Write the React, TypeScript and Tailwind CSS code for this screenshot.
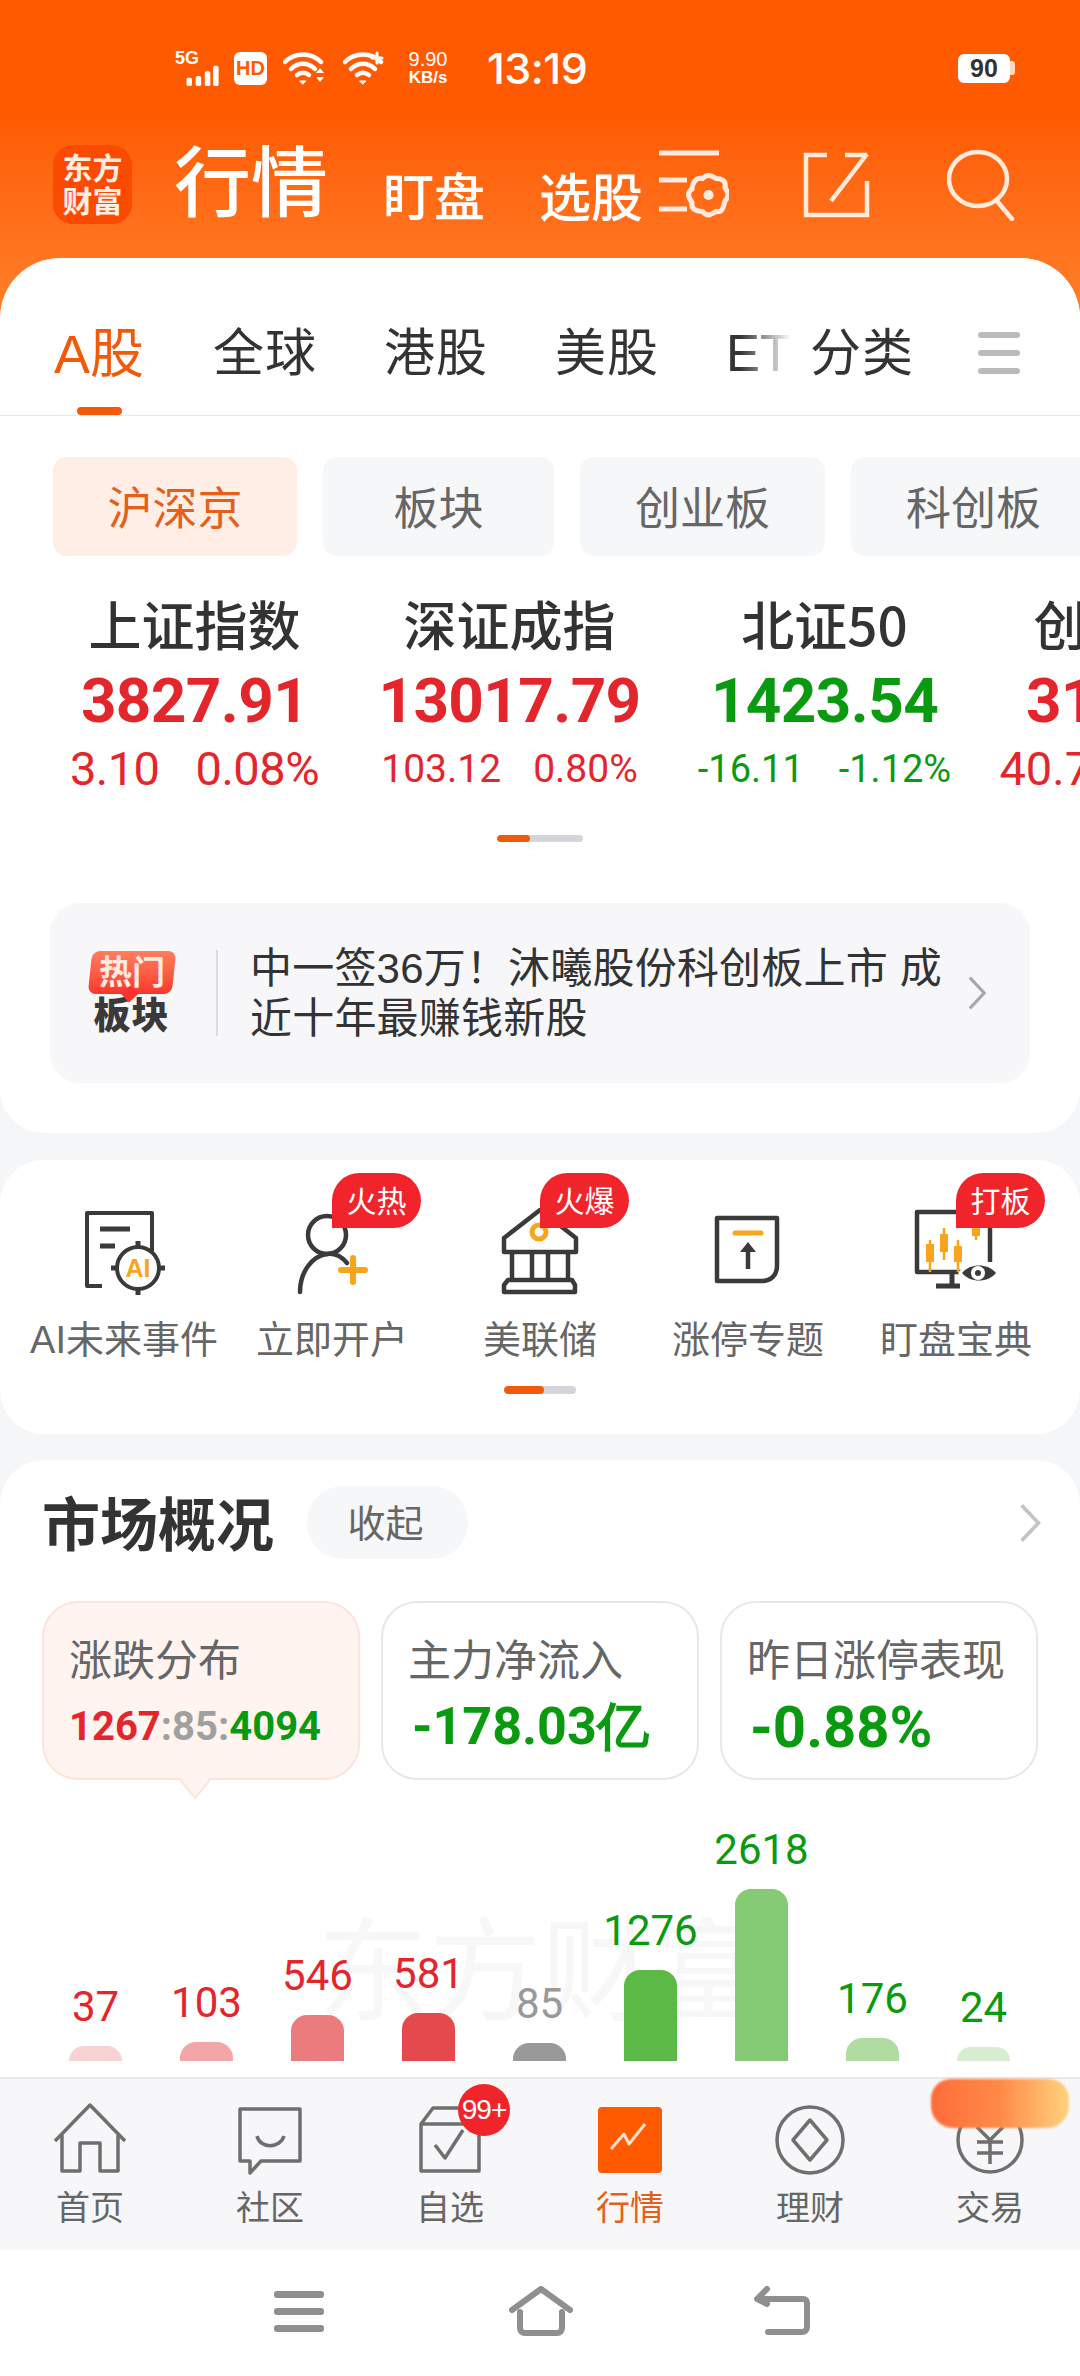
import React from "react";

const RED = "text-[#e3262c]";
const GREEN = "text-[#0a9a10]";
const NUM = "[font-family:Roboto,'Liberation_Sans',sans-serif]";

function Wifi({ plus }: { plus?: boolean }) {
  return (
    <svg width="42" height="34" viewBox="0 0 42 34" fill="none" stroke="#fff" strokeLinecap="round">
      <path d="M2 11C12 1 28 1 38 11" strokeWidth="4.5" />
      <path d="M8 18C15 11 25 11 32 18" strokeWidth="4.5" />
      <path d="M14 24C18 21 22 21 26 24" strokeWidth="4.5" />
      <path d="M17 30h6l-3 3z" fill="#fff" strokeWidth="1" />
      {plus ? (
        <path d="M34 2v10M29 7h10" strokeWidth="3" />
      ) : (
        <path d="M33 22l4-5 4 5zM33 26h8l-4 5z" fill="#fff" stroke="none" />
      )}
    </svg>
  );
}

function StatusBar() {
  return (
    <div className="h-[44px] flex items-center pl-[175px] pr-[65px] text-white">
      <div className="relative w-[48px] h-[34px]">
        <span className="absolute left-0 top-[-3px] text-[18px] leading-[20px] font-bold">5G</span>
        <svg className="absolute left-[10px] top-[13px]" width="36" height="22" viewBox="0 0 36 24" fill="#fff">
          <rect x="0" y="15" width="6" height="9" rx="2" />
          <rect x="10" y="13" width="6" height="11" rx="2" />
          <rect x="20" y="8" width="6" height="16" rx="2" />
          <rect x="29" y="2" width="6" height="22" rx="2" />
        </svg>
      </div>
      <div className="ml-[11px] w-[33px] h-[33px] bg-white rounded-[6px] flex items-center justify-center text-[#ff5a00] text-[20px] leading-none font-bold">HD</div>
      <div className="ml-[16px] flex"><Wifi /></div>
      <div className="ml-[18px] flex"><Wifi plus /></div>
      <div className="ml-[22px] w-[42px] flex flex-col items-center">
        <span className="text-[20px] leading-[20px] whitespace-nowrap">9.90</span>
        <span className="text-[17px] leading-[18px] font-bold whitespace-nowrap">KB/s</span>
      </div>
      <span className="ml-[38px] [font-family:Inter,sans-serif] text-[43px] leading-[44px] font-medium tracking-[-0.5px]">13:19</span>
      <div className="ml-auto flex items-center">
        <div className="w-[52px] h-[29px] bg-white rounded-[6px] flex items-center justify-center text-[#333] text-[25px] leading-none font-bold">90</div>
        <div className="w-[5px] h-[14px] bg-[#ffd9c0] rounded-r-[3px]" />
      </div>
    </div>
  );
}

function TitleRow() {
  return (
    <div className="mt-[55px] h-[79px] flex items-end pl-[53px]">
      <div className="w-[79px] h-[79px] rounded-[20px] bg-[#fb4a02] flex flex-col items-center justify-center text-[#ffeee2] text-[30px] leading-[33px] font-bold">
        <span>东方</span>
        <span>财富</span>
      </div>
      <span className="ml-[42px] text-white text-[77px] leading-[79px] font-medium">行情</span>
      <span className="ml-[55px] text-white text-[51px] leading-[50px] font-medium">盯盘</span>
      <span className="ml-[54px] text-white text-[52px] leading-[50px] font-medium">选股</span>
      <svg className="ml-[14px] mb-[5px]" width="72" height="72" viewBox="0 0 72 72" fill="none" stroke="#ffeadb" strokeWidth="5">
        <path d="M2 6h60M2 33h28M2 62h28" />
        <g transform="translate(50 48) scale(1.5) translate(-53 -42)">
          <path strokeWidth="3.4" d="M50 31c4-4 7-1 9 0 3 0 7 1 6 6 1 2 4 5 0 9-1 3-1 8-6 7-3 2-6 4-9 0-3 0-8-1-7-6-2-3-4-6 0-9 0-3 2-8 7-7z" />
          <circle cx="54" cy="42" r="3.4" fill="#ffeadb" stroke="none" />
        </g>
      </svg>
      <svg className="ml-[74px] mb-[5px]" width="68" height="68" viewBox="0 0 68 68" fill="none" stroke="#ffeadb" strokeWidth="4.5">
        <path d="M24 4H3v60h61V30" />
        <path d="M42 4h22v0M64 3L28 50" />
      </svg>
      <svg className="ml-[76px] mb-[3px]" width="70" height="72" viewBox="0 0 70 72" fill="none" stroke="#ffeadb" strokeWidth="4.5">
        <ellipse cx="31" cy="30" rx="29" ry="27" />
        <path d="M50 52l15 18" strokeLinecap="round" />
      </svg>
    </div>
  );
}

function Header() {
  return (
    <div className="h-[318px] pt-[46px] bg-linear-to-b from-[#ff5a00] from-[35%] to-[#ff7f28]">
      <StatusBar />
      <TitleRow />
    </div>
  );
}

function MarketTabs() {
  return (
    <div className="relative h-[158px] border-b border-b-[#e9e9eb] overflow-hidden">
      <div className="flex pl-[54px] pt-[68px] text-[51px] leading-[50px] text-[#333]">
        <div className="w-[90px] flex flex-col items-center text-[#f25a0a]">
          <span className="translate-y-[3px] whitespace-nowrap text-[54px]">A股</span>
          <div className="mt-[31px] w-[45px] h-[8px] rounded-[4px] bg-[#f25a0a]" />
        </div>
        <span className="ml-[69px] tracking-[1px] translate-y-[3px]">全球</span>
        <span className="ml-[67px] tracking-[1px] translate-y-[3px]">港股</span>
        <span className="ml-[67px] tracking-[1px] translate-y-[3px]">美股</span>
        <span className="ml-[67px] translate-y-[3px]">ETF</span>
      </div>
      <div className="absolute right-0 top-0 h-full w-[340px] flex pt-[68px] bg-linear-to-r from-transparent via-white via-[15%] to-white">
        <span className="ml-[70px] text-[51px] leading-[50px] text-[#333] tracking-[1px] translate-y-[3px]">分类</span>
        <div className="ml-[64px] mt-[6px] flex flex-col gap-[12px]">
          <div className="w-[42px] h-[6px] rounded-[3px] bg-[#bbbbbb]" />
          <div className="w-[42px] h-[6px] rounded-[3px] bg-[#bbbbbb]" />
          <div className="w-[42px] h-[6px] rounded-[3px] bg-[#bbbbbb]" />
        </div>
      </div>
    </div>
  );
}

function Pills() {
  const cls = "h-[99px] shrink-0 rounded-[14px] flex items-center justify-center pt-[6px] text-[45px] leading-none";
  return (
    <div className="mt-[41px] flex pl-[53px] gap-[26px] overflow-hidden">
      <div className={`${cls} w-[244px] bg-[#ffeee6] text-[#e4601a]`}>沪深京</div>
      <div className={`${cls} w-[231px] bg-[#f6f7f9] text-[#666]`}>板块</div>
      <div className={`${cls} w-[245px] bg-[#f6f7f9] text-[#666]`}>创业板</div>
      <div className={`${cls} w-[245px] bg-[#f6f7f9] text-[#666]`}>科创板</div>
    </div>
  );
}

const indices = [
  { n: "上证指数", v: "3827.91", a: "3.10", b: "0.08%", c: RED, s: "text-[47px] gap-[36px] tracking-[-0.5px]" },
  { n: "深证成指", v: "13017.79", a: "103.12", b: "0.80%", c: RED, s: "text-[39px] gap-[32px]" },
  { n: "北证50", v: "1423.54", a: "-16.11", b: "-1.12%", c: GREEN, s: "text-[38px] gap-[35px]" },
  { n: "创业板指", v: "3123.45", a: "40.71", b: "1.32%", c: RED, s: "text-[47px] gap-[36px]" },
];

function Indices() {
  return (
    <div className="mt-[37px] flex pl-[37px] overflow-hidden">
      {indices.map((d) => (
        <div key={d.n} className="w-[315px] shrink-0 flex flex-col items-center">
          <span className="[font-family:'Noto_Sans_CJK_SC',sans-serif] text-[53px] leading-[60px] font-medium text-[#333] whitespace-nowrap">{d.n}</span>
          <span className={`mt-[13px] ${NUM} text-[62px] leading-[70px] font-bold tracking-[-0.6px] ${d.c}`}>{d.v}</span>
          <div className={`mt-[8px] leading-[50px] flex whitespace-nowrap ${NUM} ${d.s} ${d.c}`}>
            <span>{d.a}</span>
            <span>{d.b}</span>
          </div>
        </div>
      ))}
    </div>
  );
}

function Dots({ w, a, mt, h }: { w: string; a: string; mt: string; h: string }) {
  return (
    <div className={`${mt} ${w} ${h} mx-auto rounded-full bg-[#d3d5d9] overflow-hidden`}>
      <div className={`${a} h-full rounded-full bg-[#f25a0a]`} />
    </div>
  );
}

function Chevron({ color, w = 22, h = 40 }: { color: string; w?: number; h?: number }) {
  return (
    <svg width={w} height={h} viewBox="0 0 22 40" fill="none" stroke={color} strokeWidth="3.5">
      <path d="M3 3l16 17L3 37" />
    </svg>
  );
}

function News() {
  return (
    <div className="mt-[61px] mx-[50px] h-[180px] rounded-[30px] bg-[#f7f7f9] flex items-center">
      <div className="ml-[38px] w-[87px] flex flex-col items-center">
        <div className="relative w-[84px] h-[43px] rounded-[8px] bg-linear-to-b from-[#ff7d5e] to-[#f9332c] -skew-x-6 flex items-center justify-center text-[#ffe9e0] text-[33px] leading-none font-bold">
          <span className="skew-x-6">热门</span>
          <div className="absolute left-[36px] bottom-[-6px] w-[12px] h-[12px] bg-[#f9332c] rotate-45" />
        </div>
        <span className="mt-[5px] text-[37px] leading-[36px] font-black text-[#3a3a3a] tracking-[1px]">板块</span>
      </div>
      <div className="ml-[41px] w-[2px] h-[86px] bg-[#dcdcde]" />
      <div className="ml-[32px] w-[700px] text-[42px] leading-[50px] text-[#333] pt-[2px] tracking-[0.2px]">
        <div className="whitespace-nowrap">中一签36万！沐曦股份科创板上市 成</div>
        <div className="whitespace-nowrap">近十年最赚钱新股</div>
      </div>
      <div className="ml-[17px] flex"><Chevron color="#a8a8a8" w={20} h={36} /></div>
    </div>
  );
}

const ink = "#3a3a3a";
const amber = "#f7a51e";

function IconAI() {
  return (
    <svg width="100" height="100" viewBox="0 0 100 100" fill="none" stroke={ink} strokeWidth="4">
      <path d="M28 86H13V13h65v38" strokeLinejoin="round" />
      <path d="M26 29h30M26 46h15" strokeWidth="5" />
      <circle cx="64" cy="68" r="21" />
      <path d="M64 41v8M64 87v8M37 68h8M83 68h8" strokeWidth="5" />
      <text x="64" y="77" textAnchor="middle" fontSize="25" fontWeight="700" fill={amber} stroke="none" fontFamily="Liberation Sans">AI</text>
    </svg>
  );
}
function IconUser() {
  return (
    <svg width="100" height="100" viewBox="0 0 100 100" fill="none" stroke={ink} strokeWidth="4.5">
      <ellipse cx="45" cy="35" rx="19" ry="19" />
      <path d="M18 92c0-20 12-36 27-38 9-1 15 3 20 9" strokeLinecap="round" />
      <path d="M71 58v24M59 70h24" stroke={amber} strokeWidth="6" strokeLinecap="round" />
    </svg>
  );
}
function IconBank() {
  return (
    <svg width="100" height="100" viewBox="0 0 100 100" fill="none" stroke={ink} strokeWidth="4.5" strokeLinejoin="round">
      <path d="M50 10L14 38v14h72V38z" />
      <path d="M22 52v28M42 52v28M58 52v28M78 52v28" />
      <path d="M18 80h64l3 5v7H14v-7z" />
      <circle cx="49" cy="32" r="7" stroke={amber} strokeWidth="5" />
    </svg>
  );
}
function IconLimit() {
  return (
    <svg width="100" height="100" viewBox="0 0 100 100" fill="none" stroke={ink} strokeWidth="4.5" strokeLinejoin="round">
      <path d="M19 18h60v48c0 9-6 15-15 15H19z" />
      <path d="M37 33h26" stroke={amber} strokeWidth="5" strokeLinecap="round" />
      <path d="M50 69V48" />
      <path d="M42 52l8-10 8 10z" fill={ink} stroke="none" />
    </svg>
  );
}
function IconWatch() {
  return (
    <svg width="100" height="100" viewBox="0 0 100 100" fill="none" stroke={ink} strokeWidth="4.5" strokeLinejoin="round">
      <path d="M84 62V12H11v60h46" />
      <path d="M30 86h24M46 74v12" strokeWidth="5" />
      <path d="M24 40v32M38 28v32M52 40v32M70 20v20" stroke={amber} strokeWidth="2.5" />
      <path d="M24 44v18M38 34v18M52 46v16M70 26v10" stroke={amber} strokeWidth="8" />
      <path d="M52 73c10-14 32-14 40 0-8 14-30 14-40 0z" fill="#fff" stroke="none" />
      <path d="M56 73c8-10 26-10 34 0-8 10-26 10-34 0z" fill={ink} stroke="none" />
      <circle cx="72" cy="73" r="7" fill="#fff" stroke="none" />
      <circle cx="72" cy="73" r="3" fill={ink} stroke="none" />
    </svg>
  );
}

const entries: { label: string; badge?: string; icon: React.ReactNode }[] = [
  { label: "AI未来事件", icon: <IconAI /> },
  { label: "立即开户", badge: "火热", icon: <IconUser /> },
  { label: "美联储", badge: "火爆", icon: <IconBank /> },
  { label: "涨停专题", icon: <IconLimit /> },
  { label: "盯盘宝典", badge: "打板", icon: <IconWatch /> },
];

function Entries() {
  return (
    <div className="mt-[27px] h-[274px] rounded-[44px] bg-white pt-[40px]">
      <div className="flex pl-[20px]">
        {entries.map((e) => (
          <div key={e.label} className="relative w-[208px] flex flex-col items-center">
            {e.icon}
            <span className="mt-[18px] text-[38px] leading-[44px] text-[#666] whitespace-nowrap">{e.label}</span>
            {e.badge && (
              <div className="absolute left-[104px] top-[-27px] w-[89px] h-[55px] rounded-[28px] rounded-bl-none bg-[#f0242a] text-white text-[30px] leading-none pt-[3px] flex items-center justify-center">
                {e.badge}
              </div>
            )}
          </div>
        ))}
      </div>
      <Dots mt="mt-[24px]" w="w-[72px]" h="h-[8px]" a="w-[40px]" />
    </div>
  );
}

function OverviewCard({ label, active, children }: { label: string; active?: boolean; children: React.ReactNode }) {
  return (
    <div className={`relative w-[318px] h-[179px] rounded-[36px] border-2 pl-[25px] pt-[30px] ${active ? "bg-[#fff4f0] border-[#fde4da]" : "bg-white border-[#e8e8e8]"}`}>
      <div className="text-[43px] leading-[56px] text-[#666] whitespace-nowrap">{label}</div>
      <div className="mt-[5px] h-[66px] flex items-center whitespace-nowrap">{children}</div>
      {active && (
        <div className="absolute left-[139px] bottom-[-15px] w-[24px] h-[24px] rotate-45 skew-x-6 skew-y-6 bg-[#fff4f0] border-r-2 border-b-2 border-[#fde4da]" />
      )}
    </div>
  );
}

const bars = [
  { v: "37", h: 15, c: "bg-[#f9d2d3]", t: RED },
  { v: "103", h: 19, c: "bg-[#f3a6a8]", t: RED },
  { v: "546", h: 46, c: "bg-[#ec7b7e]", t: RED },
  { v: "581", h: 48, c: "bg-[#e5494d]", t: RED },
  { v: "85", h: 18, c: "bg-[#999999]", t: "text-[#999]" },
  { v: "1276", h: 91, c: "bg-[#5cb945]", t: GREEN },
  { v: "2618", h: 172, c: "bg-[#85ca75]", t: GREEN },
  { v: "176", h: 23, c: "bg-[#b0dca1]", t: GREEN },
  { v: "24", h: 14, c: "bg-[#d6edcf]", t: GREEN },
];

function Overview() {
  return (
    <div className="relative mt-[26px] flex-1 min-h-0 rounded-t-[44px] bg-white flex flex-col overflow-hidden">
      <div className="mt-[26px] h-[73px] flex items-center pl-[42px] pr-[38px]">
        <span className="text-[58px] leading-none font-bold text-[#333] pt-[6px]">市场概况</span>
        <div className="ml-[33px] w-[161px] h-[73px] rounded-[36px] bg-[#f6f7f9] flex items-center justify-center pr-[4px] text-[38px] pt-[3px] leading-none text-[#666]">收起</div>
        <div className="ml-auto flex"><Chevron color="#c4c4c4" w={24} h={42} /></div>
      </div>
      <div className="mt-[42px] flex pl-[42px] gap-[21px]">
        <OverviewCard label="涨跌分布" active>
          <span className={`${NUM} text-[40px] leading-none font-bold`}>
            <span className={RED}>1267</span>
            <span className="text-[#a0a0a0]">:85:</span>
            <span className={GREEN}>4094</span>
          </span>
        </OverviewCard>
        <OverviewCard label="主力净流入">
          <span className={`${NUM} ml-[4px] text-[52px] leading-none font-bold ${GREEN}`}>-178.03亿</span>
        </OverviewCard>
        <OverviewCard label="昨日涨停表现">
          <span className={`${NUM} ml-[3px] text-[58px] leading-none font-bold ${GREEN}`}>-0.88%</span>
        </OverviewCard>
      </div>
      <div className="absolute left-[317px] top-[458px] text-[112px] leading-[112px] text-[#f7f7f7] whitespace-nowrap">东方财富</div>
      <div className="relative flex-1 flex items-end pl-[40px] pb-[16px]">
        {bars.map((b) => (
          <div key={b.v} className="w-[111px] flex flex-col items-center">
            <span className={`${NUM} text-[42px] leading-[42px] mb-[18px] ${b.t}`}>{b.v}</span>
            <div className={`w-[53px] rounded-t-[16px] ${b.c}`} style={{ height: b.h }} />
          </div>
        ))}
      </div>
    </div>
  );
}

const tg = "#6f6f6f";
const tabs: { label: string; active?: boolean; icon: React.ReactNode }[] = [
  {
    label: "首页",
    icon: (
      <svg width="80" height="72" viewBox="0 0 80 72" fill="none" stroke={tg} strokeWidth="3.5" strokeLinejoin="round">
        <path d="M5 38L40 2l35 36M12 32v36h18V40h20v28h18V32" />
      </svg>
    ),
  },
  {
    label: "社区",
    icon: (
      <svg width="80" height="72" viewBox="0 0 80 72" fill="none" stroke={tg} strokeWidth="3.5" strokeLinejoin="round">
        <path d="M10 6h60v52H31l-11 12v-12H10z" />
        <path d="M27 33c3 13 23 13 27 0" />
      </svg>
    ),
  },
  {
    label: "自选",
    icon: (
      <svg width="80" height="72" viewBox="0 0 80 72" fill="none" stroke={tg} strokeWidth="3.5" strokeLinejoin="round">
        <path d="M11 21l12-16h36v16M11 21h58v47H11z" />
        <path d="M25 42l10 13 18-28" />
      </svg>
    ),
  },
  {
    label: "行情",
    active: true,
    icon: (
      <svg width="80" height="72" viewBox="0 0 80 72" fill="none">
        <rect x="8" y="4" width="64" height="66" rx="4" fill="#ff5a00" />
        <path d="M21 46l13-15 5 10 16-20" stroke="#ffe0cc" strokeWidth="3" strokeLinejoin="round" />
      </svg>
    ),
  },
  {
    label: "理财",
    icon: (
      <svg width="80" height="72" viewBox="0 0 80 72" fill="none" stroke={tg} strokeWidth="3.5" strokeLinejoin="round">
        <circle cx="40" cy="37" r="33" />
        <path d="M40 17l17 20-17 20-17-20z" />
      </svg>
    ),
  },
  {
    label: "交易",
    icon: (
      <svg width="80" height="72" viewBox="0 0 80 72" fill="none" stroke={tg} strokeWidth="3.5">
        <circle cx="40" cy="37" r="32" />
        <path d="M27 24l13 13 13-13M27 39h26M27 50h26M40 37v24" />
      </svg>
    ),
  },
];

function TabBar() {
  return (
    <div className="relative h-[173px] shrink-0 border-t-2 border-t-[#e9e9ec] bg-[#f7f7f9] grid grid-cols-6 pt-[24px]">
      {tabs.map((t) => (
        <div key={t.label} className="relative flex flex-col items-center">
          {t.icon}
          <span className={`mt-[13px] text-[34px] leading-[40px] ${t.active ? "text-[#e4601a]" : "text-[#666]"}`}>{t.label}</span>
          {t.label === "自选" && (
            <div className="absolute left-[98px] top-[-19px] w-[52px] h-[52px] rounded-full bg-[#f0242a] text-white text-[28px] leading-none font-medium flex items-center justify-center tracking-[-1px]">99+</div>
          )}
        </div>
      ))}
      <div className="absolute left-[931px] top-0 w-[138px] h-[49px] rounded-[22px] rounded-t-[20px] bg-linear-to-r from-[#ff6b3a] via-[#ff8a48] to-[#ffd27c] blur-[1px]" />
    </div>
  );
}

function NavBar() {
  return (
    <div className="h-[126px] shrink-0 bg-white flex items-center justify-center pb-[4px] pl-[1px] gap-[180px] text-[#8f8f8f]">
      <div className="w-[60px] flex flex-col items-center gap-[10px]">
        <div className="w-[50px] h-[7px] rounded-[3px] bg-[#8f8f8f]" />
        <div className="w-[50px] h-[7px] rounded-[3px] bg-[#8f8f8f]" />
        <div className="w-[50px] h-[7px] rounded-[3px] bg-[#8f8f8f]" />
      </div>
      <svg width="64" height="50" viewBox="0 0 64 50" fill="none" stroke="#8f8f8f" strokeWidth="6" strokeLinejoin="round" strokeLinecap="round">
        <path d="M3 24L32 3l29 21" />
        <path d="M11 26v16c0 3 2 5 5 5h32c3 0 5-2 5-5V26" />
      </svg>
      <svg width="60" height="50" viewBox="0 0 60 50" fill="none" stroke="#8f8f8f" strokeWidth="6" strokeLinejoin="round" strokeLinecap="round">
        <path d="M6 13h44c3 0 4 2 4 4v24c0 3-2 5-5 5H15" />
        <path d="M14 3L4 13l10 5" />
      </svg>
    </div>
  );
}

export default function App() {
  return (
    <div className="relative w-[1080px] h-[2376px] overflow-hidden flex flex-col bg-[#f5f6f8] [font-family:'Liberation_Sans','Noto_Sans_CJK_SC',sans-serif]">
      <Header />
      <div className="-mt-[60px] h-[875px] shrink-0 rounded-t-[60px] rounded-b-[44px] bg-white overflow-hidden">
        <MarketTabs />
        <Pills />
        <Indices />
        <Dots mt="mt-[41px]" w="w-[86px]" h="h-[7px]" a="w-[33px]" />
        <News />
      </div>
      <Entries />
      <Overview />
      <TabBar />
      <NavBar />
    </div>
  );
}
